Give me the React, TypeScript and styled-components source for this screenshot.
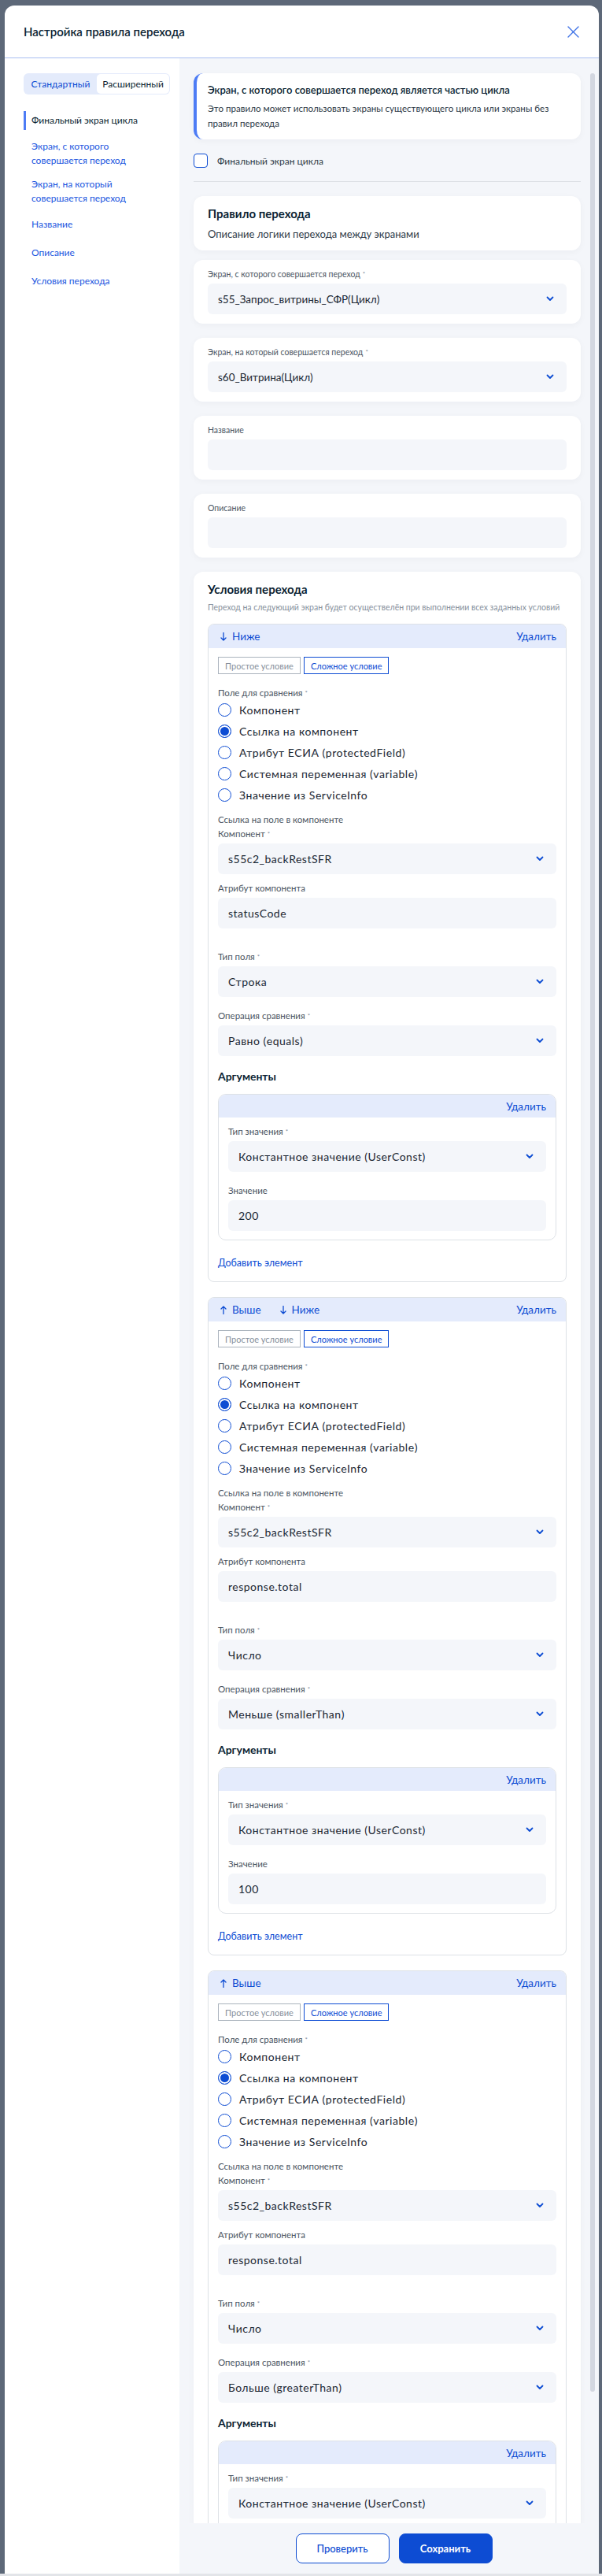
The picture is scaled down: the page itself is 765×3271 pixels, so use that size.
import React from 'react';
import styled, { createGlobalStyle } from 'styled-components';

const GlobalStyle = createGlobalStyle`
  * { box-sizing: border-box; }
  body {
    margin: 0;
    background: #5d6878;
    font-family: Lato, "Noto Sans", sans-serif;
    color: #0b1f33;
  }
`;

const BLUE = '#0d4cd3';

const Backdrop = styled.div`
  height: 3271px;
  padding: 7px 4px 0 6px;
  border-bottom: 3px solid #e3e5e9;
`;

const Modal = styled.div`
  height: 3261px;
  background: #fff;
  border-radius: 12px 12px 0 0;
  display: flex;
  flex-direction: column;
  overflow: hidden;
`;

const Header = styled.div`
  height: 67px;
  flex-shrink: 0;
  display: flex;
  align-items: center;
  justify-content: space-between;
  padding: 0 25px 0 24px;
  border-bottom: 1px solid #a9bef1;
`;

const Title = styled.h1`
  margin: 0;
  font-size: 15px;
  font-weight: 600;
  line-height: 22px;
  color: #0b1f33;
`;

const Body = styled.div`
  flex: 1;
  min-height: 0;
  display: flex;
`;

const Sidebar = styled.aside`
  width: 222px;
  flex-shrink: 0;
  padding: 19px 12px 0 24px;
  background: #fff;
`;

const Segmented = styled.div`
  display: flex;
  height: 27px;
  padding: 1px;
  border-radius: 6px;
  background: #e4ebfb;
`;

const SegItem = styled.div<{ $selected?: boolean }>`
  flex: 1;
  display: flex;
  align-items: center;
  justify-content: center;
  font-size: 12px;
  border-radius: 5px;
  color: ${(p) => (p.$selected ? '#0b1f33' : BLUE)};
  background: ${(p) => (p.$selected ? '#fff' : 'transparent')};
`;

const Nav = styled.nav`
  margin-top: 21px;
  width: 150px;
  display: flex;
  flex-direction: column;
  gap: 12px;
`;

const NavItem = styled.div<{ $active?: boolean }>`
  min-height: 24px;
  display: flex;
  align-items: center;
  padding-left: 7px;
  border-left: 3px solid ${(p) => (p.$active ? '#4d7cf5' : 'transparent')};
  font-size: 12px;
  line-height: 18px;
  color: ${(p) => (p.$active ? '#0b1f33' : '#1a56e0')};
`;

const Main = styled.main`
  flex: 1;
  min-width: 0;
  display: flex;
  flex-direction: column;
  background: #f4f6fa;
`;

const Scroll = styled.div`
  flex: 1;
  min-height: 0;
  overflow: hidden;
  position: relative;
  padding: 19px 23px 0 18px;
`;

const ScrollThumb = styled.div`
  position: absolute;
  top: 19px;
  right: 5px;
  width: 6px;
  height: 2944px;
  border-radius: 3px;
  background: #d3d7e0;
`;

const Card = styled.section<{ $mt?: number; $pb?: number }>`
  margin-top: ${(p) => p.$mt ?? 0}px;
  background: #fff;
  border-radius: 12px;
  padding: 10px 18px ${(p) => p.$pb ?? 12}px;
  box-shadow: 0 2px 8px rgba(11, 31, 51, 0.04);
`;

const InfoCard = styled(Card)`
  border-left: 4px solid #4d7cf5;
  padding: 10px 18px 11px 14px;
`;

const InfoTitle = styled.div`
  font-size: 13px;
  font-weight: 600;
  line-height: 22px;
`;

const InfoText = styled.div`
  margin-top: 3px;
  font-size: 11.6px;
  line-height: 19px;
  color: #2e3a47;
`;

const CheckRow = styled.label`
  margin-top: 18px;
  display: flex;
  align-items: center;
  gap: 12px;
  font-size: 12px;
  color: #2e3a47;
`;

const CheckBox = styled.span`
  width: 18px;
  height: 18px;
  border: 1.5px solid ${BLUE};
  border-radius: 4px;
  background: #fff;
`;

const Divider = styled.hr`
  margin: 17px 0 0;
  border: 0;
  border-top: 1px solid #dde0e5;
`;

const CardTitle = styled.h2`
  margin: 0;
  font-size: 15px;
  font-weight: 700;
  line-height: 24px;
`;

const CardSub = styled.div<{ $muted?: boolean }>`
  margin-top: ${(p) => (p.$muted ? 3 : 4)}px;
  font-size: ${(p) => (p.$muted ? 10.5 : 13)}px;
  line-height: ${(p) => (p.$muted ? 16 : 20)}px;
  color: ${(p) => (p.$muted ? '#86909c' : '#2e3a47')};
`;

const Label = styled.div<{ $mt?: number; $small?: boolean }>`
  margin-top: ${(p) => p.$mt ?? 0}px;
  font-size: ${(p) => (p.$small ? 11.5 : 10.5)}px;
  line-height: 16px;
  color: #4b5562;
`;

const Star = styled.span`
  font-size: 8px;
  vertical-align: top;
  margin-left: 3px;
  color: #86909c;
`;

const FieldBox = styled.div<{ $wide?: boolean }>`
  margin-top: 4px;
  height: 39px;
  border-radius: 6px;
  background: #f4f6fa;
  display: flex;
  align-items: center;
  justify-content: space-between;
  padding: 0 16px 0 13px;
  font-size: ${(p) => (p.$wide ? 14 : 13.5)}px;
  letter-spacing: ${(p) => (p.$wide ? 0.5 : 0)}px;
  color: #1b2733;
`;

const Blocks = styled.div`
  margin-top: 13px;
  display: flex;
  flex-direction: column;
  gap: 19px;
`;

const Block = styled.div<{ $inner?: boolean }>`
  border: 1px solid #dde1e6;
  border-radius: ${(p) => (p.$inner ? 10 : 8)}px;
  overflow: hidden;
  background: #fff;
  margin-top: ${(p) => (p.$inner ? 12 : 0)}px;
`;

const BlockHead = styled.div<{ $inner?: boolean }>`
  height: ${(p) => (p.$inner ? 29 : 30)}px;
  background: #e4ebfc;
  display: flex;
  align-items: center;
  padding: 0 12px 0 15px;
  gap: 24px;
  font-size: 13.5px;
  color: ${BLUE};
`;

const HeadLink = styled.span`
  display: inline-flex;
  align-items: center;
  gap: 7px;
`;

const Remove = styled.span`
  margin-left: auto;
`;

const BlockBody = styled.div<{ $inner?: boolean }>`
  padding: ${(p) => (p.$inner ? '10px 12px 11px' : '11px 12px 13px')};
`;

const Toggles = styled.div`
  display: flex;
  gap: 4px;
`;

const Toggle = styled.div<{ $on?: boolean }>`
  height: 22px;
  padding: 0 8px;
  display: flex;
  align-items: center;
  font-size: 11px;
  border: 1px solid ${(p) => (p.$on ? BLUE : '#aab3bd')};
  color: ${(p) => (p.$on ? BLUE : '#86909c')};
`;

const RadioList = styled.div`
  display: flex;
  flex-direction: column;
`;

const RadioRow = styled.div`
  height: 27px;
  display: flex;
  align-items: center;
  gap: 10px;
  font-size: 14px;
  letter-spacing: 0.55px;
  color: #1b2733;
`;

const RadioDot = styled.span<{ $checked?: boolean }>`
  width: 17px;
  height: 17px;
  border-radius: 50%;
  border: 1.5px solid ${BLUE};
  background: ${(p) => (p.$checked ? BLUE : '#fff')};
  box-shadow: ${(p) => (p.$checked ? 'inset 0 0 0 2px #fff' : 'none')};
`;

const SectionTitle = styled.div`
  margin-top: 16px;
  font-size: 14px;
  font-weight: 700;
  line-height: 20px;
`;

const AddLink = styled.div`
  margin-top: 19px;
  font-size: 12.5px;
  line-height: 20px;
  color: ${BLUE};
`;

const Footer = styled.footer`
  height: 64px;
  flex-shrink: 0;
  display: flex;
  align-items: center;
  justify-content: center;
  gap: 12px;
  padding-left: 12px;
`;

const Button = styled.button<{ $primary?: boolean }>`
  width: 119px;
  height: 38px;
  border-radius: 8px;
  font-family: inherit;
  font-size: 13px;
  font-weight: ${(p) => (p.$primary ? 700 : 500)};
  border: 1px solid ${BLUE};
  color: ${(p) => (p.$primary ? '#fff' : BLUE)};
  background: ${(p) => (p.$primary ? BLUE : '#fff')};
`;

const ArrowSvg = styled.svg<{ $up?: boolean }>`
  transform: ${(p) => (p.$up ? 'rotate(180deg)' : 'none')};
`;

const Chevron = () => (
  <svg width="10" height="7" viewBox="0 0 10 7" fill="none">
    <path d="M1.5 1.5 5 5l3.5-3.5" stroke={BLUE} strokeWidth="1.8" strokeLinecap="round" strokeLinejoin="round" />
  </svg>
);

const Arrow = ({ up }: { up?: boolean }) => (
  <ArrowSvg $up={up} width="8" height="11" viewBox="0 0 8 11" fill="none">
    <path d="M4 0.5v9.5M1 7l3 3 3-3" stroke={BLUE} strokeWidth="1.3" strokeLinecap="round" strokeLinejoin="round" />
  </ArrowSvg>
);

const CloseIcon = () => (
  <svg width="15" height="15" viewBox="0 0 15 15" fill="none">
    <path d="M1 1l13 13M14 1 1 14" stroke="#3f72e6" strokeWidth="1.4" strokeLinecap="round" />
  </svg>
);

const Select = ({ value, wide }: { value: string; wide?: boolean }) => (
  <FieldBox $wide={wide}>
    <span>{value}</span>
    <Chevron />
  </FieldBox>
);

const Req = () => <Star>*</Star>;

type Condition = {
  up?: boolean;
  down?: boolean;
  attr: string;
  type: string;
  op: string;
  value: string;
};

const conditions: Condition[] = [
  { down: true, attr: 'statusCode', type: 'Строка', op: 'Равно (equals)', value: '200' },
  { up: true, down: true, attr: 'response.total', type: 'Число', op: 'Меньше (smallerThan)', value: '100' },
  { up: true, attr: 'response.total', type: 'Число', op: 'Больше (greaterThan)', value: '0' },
];

const radios = [
  'Компонент',
  'Ссылка на компонент',
  'Атрибут ЕСИА (protectedField)',
  'Системная переменная (variable)',
  'Значение из ServiceInfo',
];

const ConditionBlock = ({ c }: { c: Condition }) => (
  <Block>
    <BlockHead>
      {c.up && (
        <HeadLink>
          <Arrow up />
          Выше
        </HeadLink>
      )}
      {c.down && (
        <HeadLink>
          <Arrow />
          Ниже
        </HeadLink>
      )}
      <Remove>Удалить</Remove>
    </BlockHead>
    <BlockBody>
      <Toggles>
        <Toggle>Простое условие</Toggle>
        <Toggle $on>Сложное условие</Toggle>
      </Toggles>
      <Label $small $mt={16}>
        Поле для сравнения<Req />
      </Label>
      <RadioList>
        {radios.map((r, i) => (
          <RadioRow key={r}>
            <RadioDot $checked={i === 1} />
            {r}
          </RadioRow>
        ))}
      </RadioList>
      <Label $small $mt={10}>Ссылка на поле в компоненте</Label>
      <Label $small $mt={2}>
        Компонент<Req />
      </Label>
      <Select wide value="s55c2_backRestSFR" />
      <Label $small $mt={10}>Атрибут компонента</Label>
      <FieldBox $wide>{c.attr}</FieldBox>
      <Label $small $mt={28}>
        Тип поля<Req />
      </Label>
      <Select wide value={c.type} />
      <Label $small $mt={16}>
        Операция сравнения<Req />
      </Label>
      <Select wide value={c.op} />
      <SectionTitle>Аргументы</SectionTitle>
      <Block $inner>
        <BlockHead $inner>
          <Remove>Удалить</Remove>
        </BlockHead>
        <BlockBody $inner>
          <Label $small>
            Тип значения<Req />
          </Label>
          <Select wide value="Константное значение (UserConst)" />
          <Label $small $mt={16}>Значение</Label>
          <FieldBox $wide>{c.value}</FieldBox>
        </BlockBody>
      </Block>
      <AddLink>Добавить элемент</AddLink>
    </BlockBody>
  </Block>
);

const App = () => (
  <>
    <GlobalStyle />
    <Backdrop>
      <Modal>
        <Header>
          <Title>Настройка правила перехода</Title>
          <CloseIcon />
        </Header>
        <Body>
          <Sidebar>
            <Segmented>
              <SegItem>Стандартный</SegItem>
              <SegItem $selected>Расширенный</SegItem>
            </Segmented>
            <Nav>
              <NavItem $active>Финальный экран цикла</NavItem>
              <NavItem>Экран, с которого совершается переход</NavItem>
              <NavItem>Экран, на который совершается переход</NavItem>
              <NavItem>Название</NavItem>
              <NavItem>Описание</NavItem>
              <NavItem>Условия перехода</NavItem>
            </Nav>
          </Sidebar>
          <Main>
            <Scroll>
              <InfoCard>
                <InfoTitle>Экран, с которого совершается переход является частью цикла</InfoTitle>
                <InfoText>
                  Это правило может использовать экраны существующего цикла или экраны без правил перехода
                </InfoText>
              </InfoCard>
              <CheckRow>
                <CheckBox />
                Финальный экран цикла
              </CheckRow>
              <Divider />
              <Card $mt={18} $pb={11}>
                <CardTitle>Правило перехода</CardTitle>
                <CardSub>Описание логики перехода между экранами</CardSub>
              </Card>
              <Card $mt={12}>
                <Label>
                  Экран, с которого совершается переход<Req />
                </Label>
                <Select value="s55_Запрос_витрины_СФР(Цикл)" />
              </Card>
              <Card $mt={18}>
                <Label>
                  Экран, на который совершается переход<Req />
                </Label>
                <Select value="s60_Витрина(Цикл)" />
              </Card>
              <Card $mt={18}>
                <Label>Название</Label>
                <FieldBox />
              </Card>
              <Card $mt={18}>
                <Label>Описание</Label>
                <FieldBox />
              </Card>
              <Card $mt={18}>
                <CardTitle>Условия перехода</CardTitle>
                <CardSub $muted>
                  Переход на следующий экран будет осуществелён при выполнении всех заданных условий
                </CardSub>
                <Blocks>
                  {conditions.map((c, i) => (
                    <ConditionBlock key={i} c={c} />
                  ))}
                </Blocks>
              </Card>
              <ScrollThumb />
            </Scroll>
            <Footer>
              <Button>Проверить</Button>
              <Button $primary>Сохранить</Button>
            </Footer>
          </Main>
        </Body>
      </Modal>
    </Backdrop>
  </>
);

export default App;
